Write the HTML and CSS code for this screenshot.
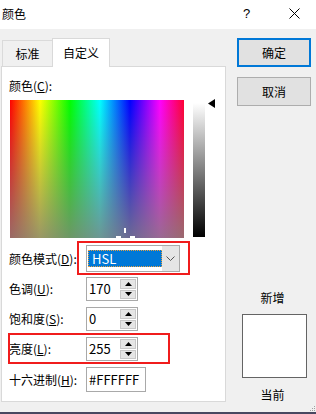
FILE: index.html
```html
<!DOCTYPE html>
<html lang="zh-CN">
<head>
  <meta charset="UTF-8" />
  <title>颜色</title>
  <link rel="stylesheet" href="styles.css">
</head>
<body>

  <div class="dialog">
    <!-- Title bar -->
    <div class="titlebar">
      <span class="title">颜色</span>
      <span class="help">?</span>
      <span class="close">
        <svg width="11" height="11" viewBox="0 0 11 11"><path d="M0.5 0.5 L10.5 10.5 M10.5 0.5 L0.5 10.5" stroke="#000" stroke-width="1" fill="none"/></svg>
      </span>
    </div>

    <div class="content">
      <div class="main">
        <div class="tabs">
          <div class="tab">标准</div>
          <div class="tab active">自定义</div>
        </div>

        <div class="panel">
          <div class="caption">颜色(<u>C</u>):</div>

          <div class="picker">
            <div class="spectrum">
              <span class="cross cross-v"></span>
              <span class="cross cross-l"></span>
              <span class="cross cross-r"></span>
            </div>
            <div class="lum"></div>
            <svg class="lum-arrow" width="7" height="9" viewBox="0 0 7 9"><path d="M0 4.5 L7 0 L7 9 Z" fill="#000"/></svg>
          </div>

          <div class="fields">
            <div class="row">
              <span class="label">颜色模式(<u>D</u>):</span>
              <div class="combo">
                <span class="combo-value">HSL</span>
                <span class="combo-btn">
                  <svg width="9" height="5" viewBox="0 0 9 5"><path d="M0.5 0.5 L4.5 4.5 L8.5 0.5" stroke="#555" stroke-width="1" fill="none"/></svg>
                </span>
              </div>
            </div>
            <div class="row">
              <span class="label">色调(<u>U</u>):</span>
              <div class="spin">
                <span class="spin-value">170</span>
                <span class="spin-btns">
                  <span class="spin-btn"><svg width="7" height="4" viewBox="0 0 7 4"><path d="M0 4 L3.5 0 L7 4 Z" fill="#000"/></svg></span>
                  <span class="spin-btn"><svg width="7" height="4" viewBox="0 0 7 4"><path d="M0 0 L7 0 L3.5 4 Z" fill="#000"/></svg></span>
                </span>
              </div>
            </div>
            <div class="row">
              <span class="label">饱和度(<u>S</u>):</span>
              <div class="spin">
                <span class="spin-value">0</span>
                <span class="spin-btns">
                  <span class="spin-btn"><svg width="7" height="4" viewBox="0 0 7 4"><path d="M0 4 L3.5 0 L7 4 Z" fill="#000"/></svg></span>
                  <span class="spin-btn"><svg width="7" height="4" viewBox="0 0 7 4"><path d="M0 0 L7 0 L3.5 4 Z" fill="#000"/></svg></span>
                </span>
              </div>
            </div>
            <div class="row">
              <span class="label">亮度(<u>L</u>):</span>
              <div class="spin">
                <span class="spin-value">255</span>
                <span class="spin-btns">
                  <span class="spin-btn"><svg width="7" height="4" viewBox="0 0 7 4"><path d="M0 4 L3.5 0 L7 4 Z" fill="#000"/></svg></span>
                  <span class="spin-btn"><svg width="7" height="4" viewBox="0 0 7 4"><path d="M0 0 L7 0 L3.5 4 Z" fill="#000"/></svg></span>
                </span>
              </div>
            </div>
            <div class="row">
              <span class="label">十六进制(<u>H</u>):</span>
              <div class="hex">#FFFFFF</div>
            </div>
          </div>

          <!-- red annotation boxes -->
          <div class="mark mark-mode"></div>
          <div class="mark mark-lum"></div>
        </div>
      </div>

      <div class="side">
        <button type="button" class="btn btn-default">确定</button>
        <button type="button" class="btn">取消</button>
        <div class="preview">
          <div class="preview-label">新增</div>
          <div class="swatch"></div>
          <div class="preview-label">当前</div>
        </div>
      </div>
    </div>

    <div class="footer">
      <svg class="grip" width="7" height="7" viewBox="0 0 7 7">
        <rect x="5" y="1" width="1" height="1" fill="#a0a0a0"/>
        <rect x="3" y="3" width="1" height="1" fill="#a0a0a0"/>
        <rect x="5" y="3" width="1" height="1" fill="#a0a0a0"/>
        <rect x="1" y="5" width="1" height="1" fill="#a0a0a0"/>
        <rect x="3" y="5" width="1" height="1" fill="#a0a0a0"/>
        <rect x="5" y="5" width="1" height="1" fill="#a0a0a0"/>
      </svg>
    </div>
  </div>

</body>
</html>
```

FILE: styles.css
```css
body {
  margin: 0;
  font-family: "Noto Sans CJK SC", "Liberation Sans", sans-serif;
  font-size: 12px;
  color: #000;
}
u {
  text-decoration: underline;
  text-underline-offset: 1px;
}
.dialog {
  width: 316px;
  height: 414px;
  background: #f0f0f0;
  display: flex;
  flex-direction: column;
  overflow: hidden;
}

/* title bar */
.titlebar {
  height: 29px;
  flex-shrink: 0;
  background: #fff;
  display: flex;
  align-items: center;
  padding-bottom: 2px;
  box-sizing: border-box;
}
.title {
  margin-left: 2px;
  line-height: 16px;
}
.help {
  margin-left: auto;
  width: 8px;
  font-family: "Liberation Sans", sans-serif;
  font-size: 13px;
  margin-right: 38px;
}
.close {
  display: flex;
  margin-right: 16px;
}

/* body */
.content {
  display: flex;
  padding-top: 9px;
}
.main {
  margin-left: 1px;
  width: 225px;
}
.tabs {
  display: flex;
  align-items: flex-end;
  height: 28px;
}
.tab {
  height: 26px;
  width: 50px;
  margin-left: 1px;
  box-sizing: border-box;
  border: 1px solid #dadada;
  border-bottom: none;
  border-right: none;
  display: flex;
  align-items: center;
  justify-content: center;
  background: #f0f0f0;
}
.tab.active {
  position: relative;
  z-index: 1;
  margin-left: 0;
  width: 58px;
  height: 29px;
  margin-bottom: -1px;
  background: #fff;
  border: 1px solid #d9d9d9;
  border-bottom: none;
  padding-bottom: 1px;
}
.panel {
  position: relative;
  height: 336px;
  box-sizing: border-box;
  background: #fff;
  border: 1px solid #d9d9d9;
  padding: 11px 0 0 7px;
}
.caption {
  line-height: 16px;
}

/* colour picker */
.picker {
  display: flex;
  margin-top: 6px;
  align-items: flex-start;
}
.spectrum {
  position: relative;
  margin-left: 1px;
  width: 174px;
  height: 138px;
  background:
    linear-gradient(to bottom, rgba(128,128,128,0), rgba(132,128,124,0.82)),
    linear-gradient(to right, #f00 0, #ff0 30px, #0f0 60px, #0ff 90px, #00f 120px, #f0f 150px, #f00 180px);
}
.cross {
  position: absolute;
  background: #fff;
}
.cross-v {
  left: 114px;
  top: 128px;
  width: 2px;
  height: 5px;
}
.cross-l {
  left: 106px;
  top: 136px;
  width: 5px;
  height: 2px;
}
.cross-r {
  left: 120px;
  top: 136px;
  width: 5px;
  height: 2px;
}
.lum {
  margin-left: 9px;
  margin-top: 3px;
  width: 12px;
  height: 134px;
  background: linear-gradient(to bottom, #fff, #000);
}
.lum-arrow {
  margin-left: 3px;
  margin-top: -1px;
}

/* fields */
.fields {
  margin-top: 7px;
  display: flex;
  flex-direction: column;
  gap: 6px;
}
.row {
  display: flex;
  align-items: center;
}
.row:first-child {
  margin-bottom: -1px;
}
.label {
  width: 77px;
  line-height: 16px;
  white-space: nowrap;
}
.combo {
  display: flex;
  align-items: center;
  width: 94px;
  height: 27px;
  box-sizing: border-box;
  border: 1px solid #a9a9a9;
  padding-left: 1px;
}
.combo-value {
  width: 74px;
  height: 17px;
  box-sizing: border-box;
  background: #0078d7;
  color: #fff;
  padding-left: 4px;
  line-height: 17px;
  font-size: 13px;
  outline: 1px dotted #e8a040;
  outline-offset: -1px;
}
.combo-btn {
  margin-left: auto;
  align-self: stretch;
  width: 17px;
  background: #e5e5e5;
  display: flex;
  align-items: center;
  justify-content: center;
}
.spin {
  display: flex;
  width: 52px;
  height: 24px;
  box-sizing: border-box;
  border: 1px solid #a9a9a9;
}
.spin-value {
  flex: 1;
  padding-left: 2px;
  line-height: 22px;
  font-size: 13px;
}
.spin-btns {
  display: flex;
  flex-direction: column;
  gap: 1px;
  width: 16px;
  padding: 1px 1px 1px 0;
}
.spin-btn {
  flex: 1;
  background: #e5e5e5;
  border: 1px solid #c8c8c8;
  display: flex;
  align-items: center;
  justify-content: center;
}
.hex {
  width: 60px;
  height: 25px;
  box-sizing: border-box;
  border: 1px solid #a9a9a9;
  padding-left: 2px;
  line-height: 23px;
  font-size: 13px;
}

/* annotation boxes */
.mark {
  position: absolute;
  border: 2px solid #f01c1c;
  box-sizing: border-box;
}
.mark-mode {
  left: 75px;
  top: 174px;
  width: 113px;
  height: 34px;
}
.mark-lum {
  left: 6px;
  top: 266px;
  width: 162px;
  height: 31px;
}

/* right column */
.side {
  margin-left: 11px;
  width: 74px;
  display: flex;
  flex-direction: column;
}
.btn {
  height: 29px;
  margin: 0;
  padding: 0;
  font: inherit;
  background: #e1e1e1;
  border: 1px solid #adadad;
}
.btn + .btn {
  margin-top: 10px;
}
.btn-default {
  border: 2px solid #0078d7;
}
.preview {
  margin-top: 184px;
  display: flex;
  flex-direction: column;
  align-items: center;
}
.preview-label {
  line-height: 16px;
  margin-right: 3px;
}
.swatch {
  margin-top: 8px;
  margin-bottom: 9px;
  width: 65px;
  height: 64px;
  box-sizing: border-box;
  background: #fff;
  border: 1px solid #646464;
}

.footer {
  flex: 1;
  display: flex;
  justify-content: flex-end;
  align-items: flex-end;
  border-bottom: 2px solid #474760;
}
.grip {
  margin-bottom: 0;
}
```
